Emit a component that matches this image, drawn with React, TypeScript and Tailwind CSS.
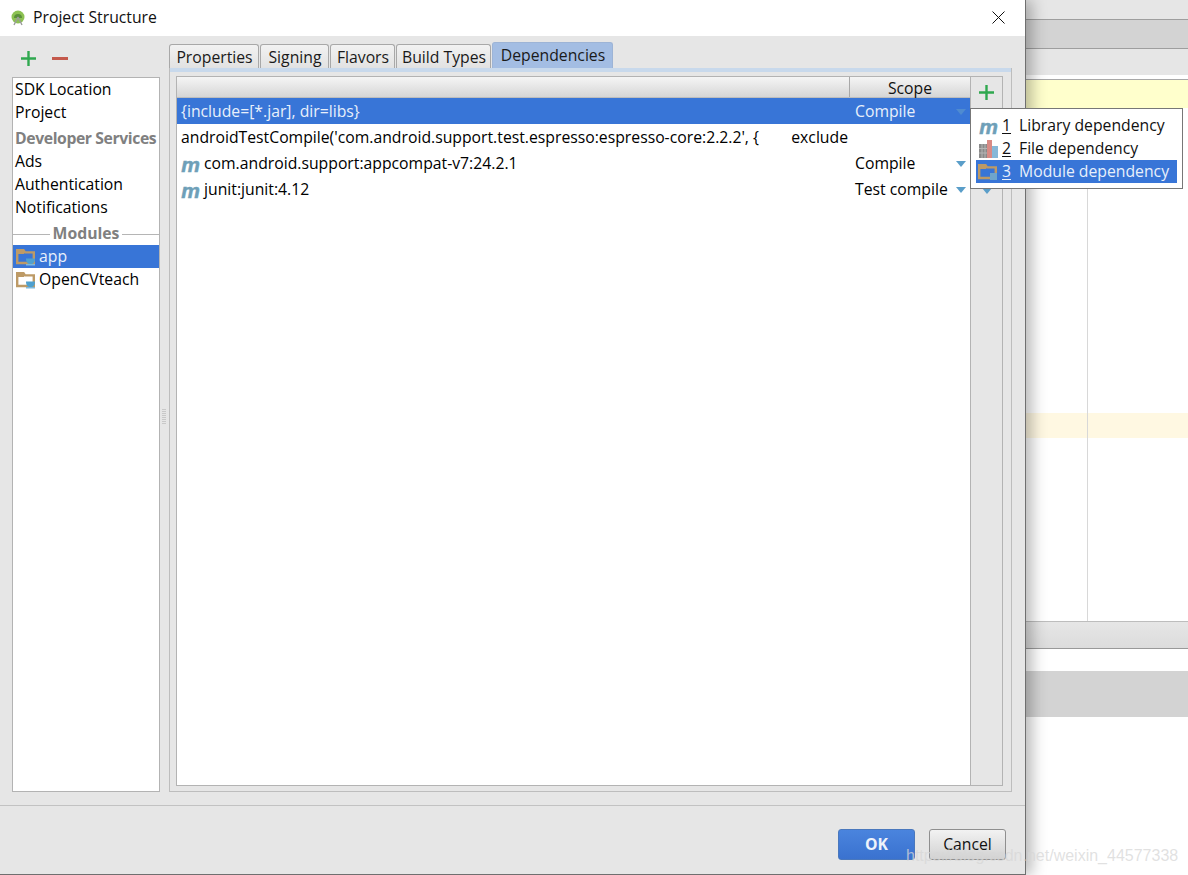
const font = { fontFamily: '"Open Sans","Noto Sans",sans-serif' };

function MIcon({ className = "" }: { className?: string }) {
  return (
    <span className={"inline-block w-[19px] text-center font-bold italic text-[#6e9fb8] text-[21px] leading-none font-['Liberation_Sans'] [-webkit-text-stroke:0.5px_#6e9fb8] " + className}>m</span>
  );
}

function Folder({ cup }: { cup?: boolean }) {
  return (
    <svg width="20" height="18" viewBox="0 0 20 18" className="shrink-0">
      <path d="M1.2 15V2.2h6.3l1.5 2.2h8.8V15z" fill="none" stroke="#bd9a66" strokeWidth="2.4" />
      <path d="M2 3h6v3H2z" fill="#bd9a66" />
      {cup ? (
        <>
          <path d="M10 10.5h9c0 3.5-1.2 5.5-4.5 5.5S10 14 10 10.5z" fill="#4ea0cf" />
          <path d="M10 16h9v1.5h-9z" fill="#7cb8dc" />
        </>
      ) : (
        <path d="M12 10h7v7h-7z" fill="#6ea5cc" />
      )}
    </svg>
  );
}

function Books() {
  return (
    <svg width="19" height="18" viewBox="0 0 19 18">
      <path d="M0 4h8v14H0z" fill="#8a8a8a" />
      <path d="M0 8.5h8M0 13h8M3 4v14M6 4v14" stroke="#b5b5b5" strokeWidth="1" />
      <path d="M8 0h5v18H8z" fill="#d98a85" />
      <path d="M13 6h6v12h-6z" fill="#86b8d8" />
    </svg>
  );
}

function Arrow({ color = "#5a9ec9" }: { color?: string }) {
  return (
    <svg width="10" height="6" viewBox="0 0 10 6" className="shrink-0">
      <path d="M0 0h10L5 6z" fill={color} />
    </svg>
  );
}

function Plus({ size = 17 }: { size?: number }) {
  return (
    <svg width={size} height={size} viewBox="0 0 17 17">
      <path d="M8.5 1v15M1 8.5h15" stroke="#2fa84f" strokeWidth="2.4" />
    </svg>
  );
}

function Tab({ label, active, w }: { label: string; active?: boolean; w: string }) {
  return (
    <div
      className={
        "flex items-center justify-center rounded-t-[3px] border border-b-0 mr-[1px] pl-[1px] " +
        w +
        (active ? " bg-[#a3bde3] border-[#9db4d6] h-[26px]" : " h-[24px] pt-[2px] bg-gradient-to-b from-[#f2f2f2] to-[#e2e2e2] border-[#a8a8a8]")
      }
    >
      {label}
    </div>
  );
}

function SideItem({ children }: { children: React.ReactNode }) {
  return <div className="h-[23px] flex items-center pl-[2px] text-black">{children}</div>;
}

function Row({ icon, name, scope, selected, tail }: { icon?: boolean; name: string; scope?: string; selected?: boolean; tail?: string }) {
  return (
    <div className={"h-[26px] flex items-center pt-[2px] " + (selected ? "bg-[#3875d7] text-[#e8f0fb]" : "text-black")}>
      <div className="w-[673px] pl-[4px] flex items-center whitespace-pre overflow-hidden">
        {icon && <MIcon className="mr-[4px]" />}
        <span>{name}</span>
        {tail && <span className="ml-auto pr-[2px]">{tail}</span>}
      </div>
      {scope && (
        <div className="flex-1 flex items-center pl-[5px] pr-[4px] justify-between">
          <span>{scope}</span>
          <Arrow color={selected ? "#4f8bd0" : "#5a9ec9"} />
        </div>
      )}
    </div>
  );
}

export default function App() {
  return (
    <div className="relative w-[1188px] h-[875px] overflow-hidden flex bg-white text-[15.75px]" style={font}>
      <div className="relative z-10 w-[1026px] h-[875px] shrink-0 flex flex-col bg-[#e6e6e6] border-r border-b border-[#6f6f6f] shadow-[6px_0_14px_rgba(0,0,0,0.28)]">
        {/* title bar */}
        <div className="h-[36px] shrink-0 bg-white flex items-center pl-[10px] pr-[20px] pb-[1px]">
          <svg width="16" height="16" viewBox="0 0 16 16" className="mr-[7px] shrink-0">
            <circle cx="8" cy="7" r="6.5" fill="#8cc152" />
            <path d="M4 8a4 4 0 0 1 8 0z" fill="#5a8f3a" />
            <path d="M8 7L4 15M8 7l4 8" stroke="#9a9a9a" strokeWidth="1.4" />
          </svg>
          <span className="text-[#111]">Project Structure</span>
          <svg width="13" height="13" viewBox="0 0 13 13" className="ml-auto">
            <path d="M0.5 0.5l12 12M12.5 0.5l-12 12" stroke="#111" strokeWidth="1" />
          </svg>
        </div>

        {/* body */}
        <div className="flex-1 flex pl-[12px] pr-[13px] min-h-0">
          {/* left */}
          <div className="w-[148px] shrink-0 flex flex-col pb-[13px]">
            <div className="h-[41px] shrink-0 flex items-center pl-[8px] gap-[15px] pt-[3px]">
              <Plus />
              <div className="w-[16px] h-[3px] bg-[#c4594c]" />
            </div>
            <div className="flex-1 bg-white border border-[#b3b3b3]">
              <SideItem>SDK Location</SideItem>
              <SideItem>Project</SideItem>
              <div className="h-[26px] flex items-center pl-[2px] pt-[4px] font-bold text-[#808080] whitespace-nowrap tracking-[-0.4px]">Developer Services</div>
              <SideItem>Ads</SideItem>
              <SideItem>Authentication</SideItem>
              <SideItem>Notifications</SideItem>
              <div className="h-[26px] flex items-center pt-[4px] font-bold text-[#808080] gap-[3px]">
                <div className="flex-1 h-px bg-[#b5b5b5]" />
                <span>Modules</span>
                <div className="flex-1 h-px bg-[#b5b5b5]" />
              </div>
              <div className="h-[23px] flex items-center pl-[3px] gap-[3px] bg-[#3875d7] text-[#e8f0fb]">
                <Folder cup />
                app
              </div>
              <div className="h-[23px] flex items-center pl-[3px] gap-[3px] text-black">
                <Folder cup />
                OpenCVteach
              </div>
            </div>
          </div>

          {/* splitter */}
          <div className="w-[9px] shrink-0 flex flex-col items-center justify-center gap-[1px] pb-[9px] pr-[1px]">
            {[0, 1, 2, 3, 4, 5, 6, 7].map((i) => (
              <div key={i} className="w-[4px] h-[1px] bg-[#c8c8c8]" />
            ))}
          </div>

          {/* right */}
          <div className="flex-1 flex flex-col min-w-0 pb-[13px]">
            <div className="h-[32px] shrink-0 flex items-end pt-[6px] text-[#1a1a1a]">
              <Tab label="Properties" w="w-[90px]" />
              <Tab label="Signing" w="w-[69px]" />
              <Tab label="Flavors" w="w-[65px]" />
              <Tab label="Build Types" w="w-[95px]" />
              <Tab label="Dependencies" active w="w-[121px]" />
            </div>
            <div className="flex-1 flex flex-col border border-[#bdbdbd] border-t-0 min-h-0">
              <div className="h-[4px] shrink-0 bg-[#c8d9ec]" />
              <div className="flex-1 flex flex-col pl-[6px] pr-[8px] pt-[4px] pb-[5px] min-h-0">
                <div className="flex-1 flex border border-[#b3b3b3] min-h-0">
                  <div className="w-[793px] shrink-0 flex flex-col bg-white">
                    <div className="h-[21px] shrink-0 flex bg-gradient-to-b from-[#f5f5f5] to-[#d6d6d6] border-b border-[#bdbdbd] box-border">
                      <div className="w-[673px] border-r border-[#a8a8a8]" />
                      <div className="flex-1 text-center leading-[22px] text-[#111]">Scope</div>
                    </div>
                    <Row name="{include=[*.jar], dir=libs}" scope="Compile" selected />
                    <Row name="androidTestCompile('com.android.support.test.espresso:espresso-core:2.2.2', {" tail="exclude" />
                    <Row icon name="com.android.support:appcompat-v7:24.2.1" scope="Compile" />
                    <Row icon name="junit:junit:4.12" scope="Test compile" />
                  </div>
                  <div className="flex-1 border-l border-[#b3b3b3] flex flex-col items-center pt-[7px]">
                    <Plus />
                    <div className="mt-[87px] leading-none flex">
                      <Arrow />
                    </div>
                  </div>
                </div>
              </div>
            </div>
          </div>
        </div>

        {/* footer */}
        <div className="h-[69px] shrink-0 border-t border-[#c2c2c2] flex justify-end gap-[14px] pt-[23px] pr-[19px]">
          <div className="w-[77px] h-[31px] rounded-[3px] bg-gradient-to-b from-[#4a84de] to-[#3a72cf] border border-[#4a78bd] text-[#eef3fb] font-bold flex items-center justify-center">OK</div>
          <div className="w-[77px] h-[31px] rounded-[3px] bg-gradient-to-b from-[#f2f2f2] to-[#d2d2d2] border border-[#8f8f8f] text-[#111] flex items-center justify-center">Cancel</div>
        </div>
      </div>

      {/* background IDE */}
      <div className="flex-1 flex flex-col min-w-0">
        <div className="h-[20px] shrink-0 bg-[#e6e6e6] border-b border-[#9e9e9e]" />
        <div className="h-[29px] shrink-0 bg-[#d3d3d3] border-b border-[#9e9e9e]" />
        <div className="h-[26px] shrink-0 bg-[#e6e6e6]" />
        <div className="h-[4px] shrink-0 bg-white" />
        <div className="h-[29px] shrink-0 bg-[#ffffcc] border-t border-[#a8a8a8]" />
        <div className="h-[513px] shrink-0 relative flex flex-col">
          <div className="absolute left-[61px] top-0 bottom-0 w-px bg-[#d8d8d8]" />
          <div className="h-[305px] shrink-0" />
          <div className="h-[25px] shrink-0 bg-[#fff8e2]" />
        </div>
        <div className="h-[28px] shrink-0 bg-gradient-to-b from-[#e6e6e6] to-[#dcdcdc] border-t border-b border-t-[#bdbdbd] border-b-[#999]" />
        <div className="h-[22px] shrink-0" />
        <div className="h-[46px] shrink-0 bg-[#d3d3d3]" />
      </div>

      {/* popup menu */}
      <div className="absolute z-20 left-[970px] top-[108px] w-[213px] h-[81px] bg-white border border-[#777] px-[5px] py-[5px] text-[#111]">
        <div className="h-[23px] flex items-center pl-[3px] pt-[1px]">
          <MIcon />
          <span className="ml-[4px] w-[17px] underline underline-offset-2">1</span>
          <span>Library dependency</span>
        </div>
        <div className="h-[23px] flex items-center pl-[3px] pt-[1px]">
          <Books />
          <span className="ml-[4px] w-[17px] underline underline-offset-2">2</span>
          <span>File dependency</span>
        </div>
        <div className="h-[23px] flex items-center pl-[2px] pt-[1px] bg-[#3875d7] text-[#e8f0fb]">
          <Folder />
          <span className="ml-[4px] w-[17px] underline underline-offset-2">3</span>
          <span>Module dependency</span>
        </div>
      </div>

      {/* watermark */}
      <div className="absolute z-30 left-[906px] top-[846px] text-[16px] leading-[20px] text-[rgba(215,215,215,0.75)] font-['Liberation_Sans'] whitespace-nowrap">https://blog.csdn.net/weixin_44577338</div>
    </div>
  );
}
